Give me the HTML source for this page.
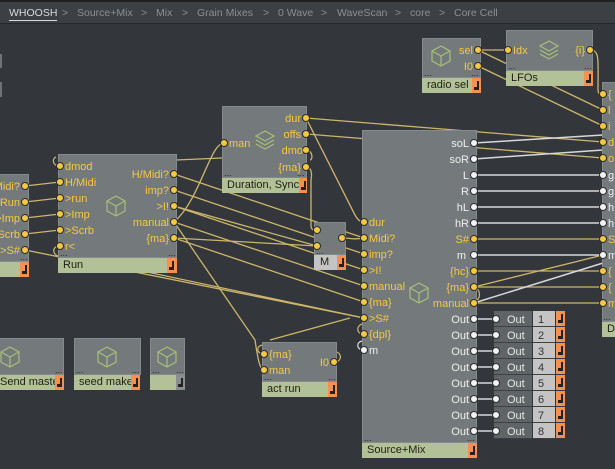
<!DOCTYPE html>
<html><head><meta charset="utf-8"><style>
*{margin:0;padding:0;box-sizing:border-box}
body{width:615px;height:469px;overflow:hidden;background:#33373b;font-family:"Liberation Sans","DejaVu Sans",sans-serif;position:relative}
#bar{position:absolute;left:0;top:0;width:615px;height:24px;background:#3c4044;border-top:2px solid #1e2022;border-bottom:1px solid #25282a}
#bar span{position:absolute;top:5px;font-size:10.5px;color:#8a8f93;white-space:nowrap}
.n{position:absolute;background:#747a7c;border:1px solid #858b8d}
.l{position:absolute;background:#b3c198;font-size:11px;color:#1e2010;padding-left:5px;line-height:15px;height:15px;white-space:nowrap;overflow:hidden}
.o{position:absolute;background:#f49050;height:15px}
.o:after{content:"";position:absolute;left:5px;top:3px;width:1.5px;height:9px;background:#222}
.o:before{content:"";position:absolute;left:2px;top:9px;width:4px;height:3px;background:#222}
svg{position:absolute;left:0;top:0}
</style></head><body>
<div id="bar">
<span style="left:9px;color:#d8dadc;border-bottom:1px solid #d8dadc;line-height:13px">WHOOSH</span>
<span style="left:62px">&gt;</span><span style="left:77px">Source+Mix</span>
<span style="left:141px">&gt;</span><span style="left:156px">Mix</span>
<span style="left:182px">&gt;</span><span style="left:197px">Grain Mixes</span>
<span style="left:263px">&gt;</span><span style="left:278px">0 Wave</span>
<span style="left:321px">&gt;</span><span style="left:337px">WaveScan</span>
<span style="left:395px">&gt;</span><span style="left:410px">core</span>
<span style="left:439px">&gt;</span><span style="left:454px">Core Cell</span>
</div>
<div style="position:absolute;left:0;top:54px;width:2px;height:14px;background:#6e7376"></div>
<div style="position:absolute;left:0;top:82px;width:2px;height:15px;background:#6e7376"></div>

<svg width="615" height="469">
<g fill="none" stroke="#cdb56a" stroke-width="1.3">
<path d="M25 186 L60 182"/><path d="M25 202 L60 198"/><path d="M25 218 L60 214"/><path d="M25 234 L60 230"/>
<path d="M25 250 L364 318"/>
<path d="M174 174 L364 238"/><path d="M174 190 L364 254"/><path d="M174 206 L364 270"/><path d="M174 206 L317 246"/>
<path d="M174 222 L364 286"/><path d="M174 238 L364 302"/><path d="M174 238 L317 246"/>
<path d="M174 222 C200 200 210 143 224 143"/><path d="M174 222 L255 340 C258 360 260 370 264 370"/>
<path d="M100 262 L364 318"/>
<path d="M176 160 L222 158"/>
<path d="M306 118 L603 142"/><path d="M306 118 L355 215 C358 220 360 222 364 222"/>
<path d="M306 134 L603 158"/>
<path d="M306 150 C313 150 313 160 310 160"/>
<path d="M306 167 C312 167 312 175 311 180 L311 226 C311 230 314 230 317 230"/>
<path d="M342 238 C352 238 352 240 364 238"/>
<path d="M478 50 L508 50"/><path d="M478 50 L603 110"/><path d="M478 66 L603 126"/>
<path d="M590 50 C600 50 598 60 598 90 C598 94 600 94 603 94"/>
<path d="M474 239 L603 239"/><path d="M474 271 L603 271"/><path d="M474 287 L603 287"/><path d="M474 303 L603 303"/>
<path d="M474 287 L603 255"/><path d="M270 340 L350 318"/>
</g>
<g fill="none" stroke="#d6d8da" stroke-width="1.5">
<path d="M474 143 L603 135"/><path d="M474 159 L603 150"/>
<path d="M474 175 L603 175"/><path d="M474 191 L603 191"/><path d="M474 207 L603 207"/><path d="M474 223 L603 223"/><path d="M474 255 L603 255"/>
<path d="M474 303 L603 263"/>
<path d="M474 319 L496 319"/><path d="M474 335 L496 335"/><path d="M474 351 L496 351"/><path d="M474 367 L496 367"/><path d="M474 383 L496 383"/><path d="M474 399 L496 399"/><path d="M474 415 L496 415"/><path d="M474 431 L496 431"/>
</g>
</svg>

<div class="n" style="left:-2px;top:174px;width:31px;height:88px"></div>
<div class="l" style="left:0;top:262px;width:20px"></div><div class="o" style="left:20px;top:262px;width:9px"></div>
<div class="n" style="left:58px;top:154px;width:119px;height:104px"></div>
<div class="l" style="left:58px;top:258px;width:109px">Run</div><div class="o" style="left:167px;top:258px;width:10px"></div>
<div class="n" style="left:222px;top:106px;width:85px;height:72px"></div>
<div class="l" style="left:222px;top:178px;width:77px">Duration, Sync</div><div class="o" style="left:299px;top:178px;width:8px"></div>
<div class="n" style="left:314px;top:222px;width:32px;height:33px"></div>
<div class="l" style="left:314px;top:255px;width:23px;background:#c4c4c4;padding-left:6px">M</div><div class="o" style="left:337px;top:255px;width:9px"></div>
<div class="n" style="left:362px;top:130px;width:115px;height:313px"></div>
<div class="l" style="left:362px;top:443px;width:106px">Source+Mix</div><div class="o" style="left:468px;top:443px;width:9px"></div>
<div class="n" style="left:422px;top:38px;width:59px;height:40px"></div>
<div class="l" style="left:422px;top:78px;width:50px">radio sel</div><div class="o" style="left:472px;top:78px;width:9px"></div>
<div class="n" style="left:506px;top:30px;width:87px;height:41px"></div>
<div class="l" style="left:506px;top:71px;width:78px">LFOs</div><div class="o" style="left:584px;top:71px;width:9px"></div>
<div class="n" style="left:602px;top:82px;width:20px;height:240px"></div>
<div class="l" style="left:602px;top:322px;width:20px">Dp</div>
<div class="n" style="left:262px;top:342px;width:75px;height:40px"></div>
<div class="l" style="left:262px;top:382px;width:66px">act run</div><div class="o" style="left:328px;top:382px;width:9px"></div>
<div class="n" style="left:-2px;top:338px;width:66px;height:37px"></div>
<div class="l" style="left:0;top:375px;width:55px;padding-left:0">Send master</div><div class="o" style="left:55px;top:375px;width:9px"></div>
<div class="n" style="left:74px;top:338px;width:67px;height:37px"></div>
<div class="l" style="left:74px;top:375px;width:57px">seed maker</div><div class="o" style="left:131px;top:375px;width:9px"></div>
<div class="n" style="left:150px;top:338px;width:35px;height:37px"></div>
<div class="l" style="left:150px;top:375px;width:26px"></div><div class="o" style="left:176px;top:375px;width:9px;background:#8a8e90"></div>
<div style="position:absolute;left:494px;top:311px;width:72px;height:128px">
<div style="position:absolute;left:0;top:0;width:38px;height:128px;background:repeating-linear-gradient(#5f6466 0 15px,#3d4144 15px 16px)"></div>
<div style="position:absolute;left:39px;top:0;width:22px;height:128px;background:repeating-linear-gradient(#c4c4c4 0 15px,#3d4144 15px 16px)"></div>
</div>

<svg width="615" height="469" font-size="11">
<defs>
<g id="cube" fill="none" stroke="#a8bf78" stroke-width="1.2"><path d="M0 -10 L9 -5 L9 5 L0 10 L-9 5 L-9 -5 Z M-9 -5 L0 0 L9 -5 M0 0 L0 10"/></g>
<g id="lay" fill="none" stroke="#a8bf78" stroke-width="1.2"><path d="M0 -9 L9 -4 L0 1 L-9 -4 Z M-9 0 L0 5 L9 0 M-9 4 L0 9 L9 4"/></g>
</defs>
<use href="#cube" x="116" y="206"/><use href="#lay" x="265" y="140"/><use href="#cube" x="419" y="293"/>
<use href="#cube" x="441" y="56"/><use href="#lay" x="549" y="50"/>
<use href="#cube" x="10" y="357"/><use href="#cube" x="107" y="357"/><use href="#cube" x="167" y="357"/>
<g fill="#222" font-size="9">
<text x="60" y="256">...</text><text x="168" y="256">...</text><text x="224" y="176">...</text><text x="297" y="176">...</text>
<text x="316" y="254">...</text><text x="364" y="441">...</text><text x="467" y="441">...</text><text x="424" y="76">...</text><text x="471" y="76">...</text>
<text x="508" y="69">...</text><text x="584" y="69">...</text><text x="264" y="380">...</text><text x="328" y="380">...</text>
<text x="55" y="373">...</text><text x="76" y="373">...</text><text x="132" y="373">...</text><text x="152" y="373">...</text><text x="176" y="373">...</text>
<text x="603" y="320">...</text><text x="20" y="260">...</text>
</g>
<g fill="none" stroke="#cdb56a" stroke-width="1.2">
<path d="M60 166 C52 166 52 158 56 157"/><path d="M60 246 C52 246 52 254 58 256"/>
<path d="M364 334 C356 334 356 326 362 324"/><path d="M264 354 C256 354 256 346 262 345"/>
<path d="M334 362 C342 362 342 354 337 352"/><path d="M474 287 C482 290 480 300 476 300"/>
</g>
<path d="M364 350 C356 350 356 342 362 341" fill="none" stroke="#ddd" stroke-width="1.2"/>
<g fill="#f5c842" stroke="#2a2d30" stroke-width="1">
<circle cx="25" cy="186" r="3.5"/><circle cx="25" cy="202" r="3.5"/><circle cx="25" cy="218" r="3.5"/><circle cx="25" cy="234" r="3.5"/><circle cx="25" cy="250" r="3.5"/>
<circle cx="60" cy="166" r="3.5"/><circle cx="60" cy="182" r="3.5"/><circle cx="60" cy="198" r="3.5"/><circle cx="60" cy="214" r="3.5"/><circle cx="60" cy="230" r="3.5"/><circle cx="60" cy="246" r="3.5"/>
<circle cx="174" cy="174" r="3.5"/><circle cx="174" cy="190" r="3.5"/><circle cx="174" cy="206" r="3.5"/><circle cx="174" cy="222" r="3.5"/><circle cx="174" cy="238" r="3.5"/>
<circle cx="224" cy="143" r="3.5"/><circle cx="306" cy="118" r="3.5"/><circle cx="306" cy="134" r="3.5"/><circle cx="306" cy="150" r="3.5"/><circle cx="306" cy="167" r="3.5"/>
<circle cx="317" cy="230" r="3.5"/><circle cx="317" cy="246" r="3.5"/><circle cx="342" cy="238" r="3.5"/>
<circle cx="364" cy="222" r="3.5"/><circle cx="364" cy="238" r="3.5"/><circle cx="364" cy="254" r="3.5"/><circle cx="364" cy="270" r="3.5"/><circle cx="364" cy="286" r="3.5"/><circle cx="364" cy="302" r="3.5"/><circle cx="364" cy="318" r="3.5"/><circle cx="364" cy="334" r="3.5"/>
<circle cx="474" cy="239" r="3.5"/><circle cx="474" cy="271" r="3.5"/><circle cx="474" cy="287" r="3.5"/><circle cx="474" cy="303" r="3.5"/>
<circle cx="478" cy="50" r="3.5"/><circle cx="478" cy="66" r="3.5"/><circle cx="508" cy="50" r="3.5"/><circle cx="590" cy="50" r="3.5"/>
<circle cx="603" cy="94" r="3.5"/><circle cx="603" cy="110" r="3.5"/><circle cx="603" cy="126" r="3.5"/><circle cx="603" cy="142" r="3.5"/><circle cx="603" cy="158" r="3.5"/>
<circle cx="603" cy="239" r="3.5"/><circle cx="603" cy="271" r="3.5"/><circle cx="603" cy="287" r="3.5"/><circle cx="603" cy="303" r="3.5"/>
<circle cx="264" cy="354" r="3.5"/><circle cx="264" cy="370" r="3.5"/><circle cx="334" cy="362" r="3.5"/>
</g>
<g fill="#f2f2f2" stroke="#2a2d30" stroke-width="1">
<circle cx="364" cy="350" r="3.5"/>
<circle cx="474" cy="143" r="3.5"/><circle cx="474" cy="159" r="3.5"/><circle cx="474" cy="175" r="3.5"/><circle cx="474" cy="191" r="3.5"/><circle cx="474" cy="207" r="3.5"/><circle cx="474" cy="223" r="3.5"/><circle cx="474" cy="255" r="3.5"/>
<circle cx="474" cy="319" r="3.5"/><circle cx="474" cy="335" r="3.5"/><circle cx="474" cy="351" r="3.5"/><circle cx="474" cy="367" r="3.5"/><circle cx="474" cy="383" r="3.5"/><circle cx="474" cy="399" r="3.5"/><circle cx="474" cy="415" r="3.5"/><circle cx="474" cy="431" r="3.5"/>
<circle cx="496" cy="319" r="3.5"/><circle cx="496" cy="335" r="3.5"/><circle cx="496" cy="351" r="3.5"/><circle cx="496" cy="367" r="3.5"/><circle cx="496" cy="383" r="3.5"/><circle cx="496" cy="399" r="3.5"/><circle cx="496" cy="415" r="3.5"/><circle cx="496" cy="431" r="3.5"/>
<circle cx="603" cy="175" r="3.5"/><circle cx="603" cy="191" r="3.5"/><circle cx="603" cy="207" r="3.5"/><circle cx="603" cy="223" r="3.5"/><circle cx="603" cy="255" r="3.5"/>
</g>
<g fill="#f5c842">
<g text-anchor="end"><text x="20" y="190">Midi?</text><text x="20" y="206">&gt;Run</text><text x="20" y="222">&gt;Imp</text><text x="20" y="238">&gt;Scrb</text><text x="20" y="254">&gt;S#</text>
<text x="169" y="178">H/Midi?</text><text x="169" y="194">imp?</text><text x="169" y="210">&gt;I!</text><text x="169" y="226">manual</text><text x="169" y="242">{ma}</text>
<text x="301" y="122">dur</text><text x="301" y="138">offs</text><text x="303" y="154">dmo</text><text x="301" y="171">{ma}</text>
<text x="469" y="243">S#</text><text x="469" y="275">{hc}</text><text x="469" y="291">{ma}</text><text x="469" y="307">manual</text>
<text x="473" y="54">sel</text><text x="473" y="70">I0</text><text x="585" y="54">{i}</text><text x="329" y="366">I0</text></g>
<text x="65" y="170">dmod</text><text x="65" y="186">H/Midi</text><text x="65" y="202">&gt;run</text><text x="65" y="218">&gt;Imp</text><text x="65" y="234">&gt;Scrb</text><text x="65" y="250">r&lt;</text>
<text x="229" y="147">man</text>
<text x="369" y="226">dur</text><text x="369" y="242">Midi?</text><text x="369" y="258">imp?</text><text x="369" y="274">&gt;I!</text><text x="369" y="290">manual</text><text x="369" y="306">{ma}</text><text x="369" y="322">&gt;S#</text><text x="369" y="338">{dpl}</text>
<text x="513" y="54">Idx</text><text x="269" y="358">{ma}</text><text x="269" y="374">man</text>
<text x="608" y="98">{</text><text x="608" y="114">l</text><text x="608" y="130">i</text><text x="608" y="146">d</text><text x="608" y="162">o</text><text x="608" y="243">S</text><text x="608" y="275">{</text><text x="608" y="291">{</text><text x="608" y="307">m</text>
</g>
<g fill="#eee">
<g text-anchor="end"><text x="469" y="147">soL</text><text x="469" y="163">soR</text><text x="469" y="179">L</text><text x="469" y="195">R</text><text x="469" y="211">hL</text><text x="469" y="227">hR</text><text x="466" y="259">m</text>
<text x="469" y="323">Out</text><text x="469" y="339">Out</text><text x="469" y="355">Out</text><text x="469" y="371">Out</text><text x="469" y="387">Out</text><text x="469" y="403">Out</text><text x="469" y="419">Out</text><text x="469" y="435">Out</text></g>
<text x="369" y="354">m</text>
<text x="608" y="179">g</text><text x="608" y="195">g</text><text x="608" y="211">h</text><text x="608" y="227">h</text><text x="608" y="259">m</text>
<g fill="#e8e8e8"><text x="507" y="323">Out</text><text x="507" y="339">Out</text><text x="507" y="355">Out</text><text x="507" y="371">Out</text><text x="507" y="387">Out</text><text x="507" y="403">Out</text><text x="507" y="419">Out</text><text x="507" y="435">Out</text></g>
<g fill="#333"><text x="538" y="323">1</text><text x="538" y="339">2</text><text x="538" y="355">3</text><text x="538" y="371">4</text><text x="538" y="387">5</text><text x="538" y="403">6</text><text x="538" y="419">7</text><text x="538" y="435">8</text></g>
</g>
</svg>
<div style="position:absolute;left:556px;top:311px;width:9px;height:128px">
<div class="o" style="left:0;top:0;width:9px"></div><div class="o" style="left:0;top:16px;width:9px"></div><div class="o" style="left:0;top:32px;width:9px"></div><div class="o" style="left:0;top:48px;width:9px"></div><div class="o" style="left:0;top:64px;width:9px"></div><div class="o" style="left:0;top:80px;width:9px"></div><div class="o" style="left:0;top:96px;width:9px"></div><div class="o" style="left:0;top:112px;width:9px"></div>
</div>
</body></html>
